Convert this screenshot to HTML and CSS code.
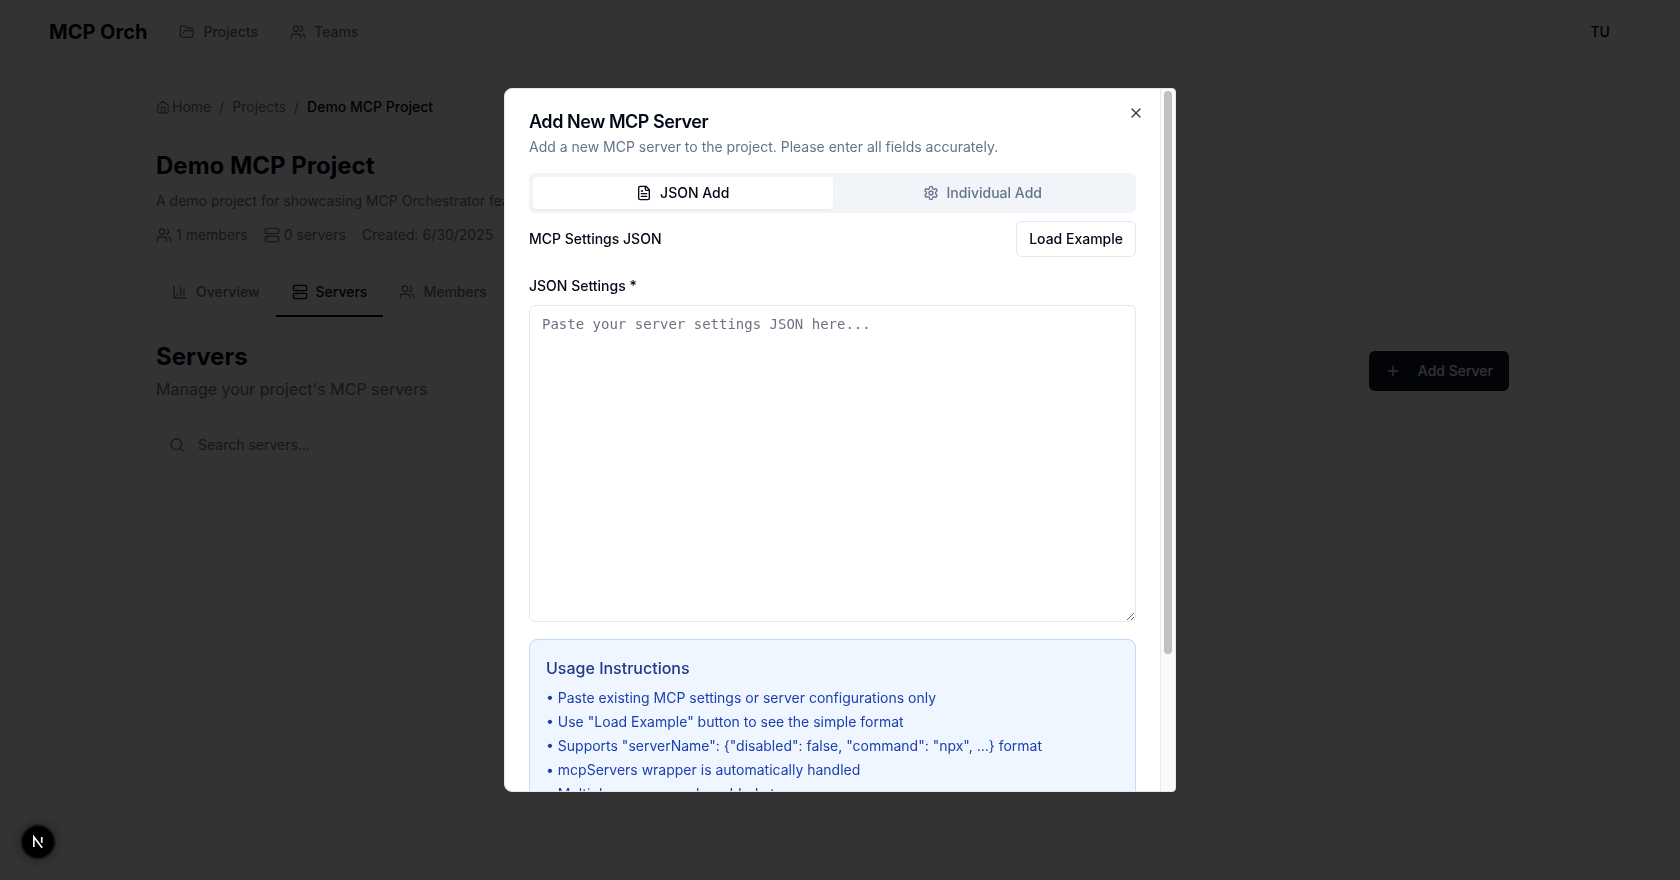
FILE: index.html
```html
<!DOCTYPE html>
<html lang="en">
<head>
<meta charset="utf-8">
<title>MCP Orch</title>
<link rel="stylesheet" href="styles.css">
</head>
<body>
<svg class="sprite" aria-hidden="true">
  <symbol id="i-folder" viewBox="0 0 24 24"><path d="m6 14 1.5-2.9A2 2 0 0 1 9.24 10H20a2 2 0 0 1 1.94 2.5l-1.54 6a2 2 0 0 1-1.95 1.5H4a2 2 0 0 1-2-2V5a2 2 0 0 1 2-2h3.9a2 2 0 0 1 1.69.9l.81 1.2a2 2 0 0 0 1.67.9H18a2 2 0 0 1 2 2v2"/></symbol>
  <symbol id="i-users" viewBox="0 0 24 24"><path d="M16 21v-2a4 4 0 0 0-4-4H6a4 4 0 0 0-4 4v2"/><circle cx="9" cy="7" r="4"/><path d="M22 21v-2a4 4 0 0 0-3-3.87"/><path d="M16 3.13a4 4 0 0 1 0 7.75"/></symbol>
  <symbol id="i-home" viewBox="0 0 24 24"><path d="m3 9 9-7 9 7v11a2 2 0 0 1-2 2H5a2 2 0 0 1-2-2z"/><path d="M9 22V12h6v10"/></symbol>
  <symbol id="i-server" viewBox="0 0 24 24"><rect x="2" y="2" width="20" height="8" rx="2"/><rect x="2" y="14" width="20" height="8" rx="2"/><path d="M6 6h.01M6 18h.01"/></symbol>
  <symbol id="i-chart" viewBox="0 0 24 24"><path d="M3 3v18h18"/><path d="M18 17V9"/><path d="M13 17V5"/><path d="M8 17v-3"/></symbol>
  <symbol id="i-search" viewBox="0 0 24 24"><circle cx="11" cy="11" r="8"/><path d="m21 21-4.3-4.3"/></symbol>
  <symbol id="i-plus" viewBox="0 0 24 24"><path d="M5 12h14"/><path d="M12 5v14"/></symbol>
  <symbol id="i-file" viewBox="0 0 24 24"><path d="M15 2H6a2 2 0 0 0-2 2v16a2 2 0 0 0 2 2h12a2 2 0 0 0 2-2V7Z"/><path d="M14 2v4a2 2 0 0 0 2 2h4"/><path d="M10 9H8"/><path d="M16 13H8"/><path d="M16 17H8"/></symbol>
  <symbol id="i-gear" viewBox="0 0 24 24"><path d="M12.22 2h-.44a2 2 0 0 0-2 2v.18a2 2 0 0 1-1 1.73l-.43.25a2 2 0 0 1-2 0l-.15-.08a2 2 0 0 0-2.73.73l-.22.38a2 2 0 0 0 .73 2.73l.15.1a2 2 0 0 1 1 1.72v.51a2 2 0 0 1-1 1.74l-.15.09a2 2 0 0 0-.73 2.73l.22.38a2 2 0 0 0 2.73.73l.15-.08a2 2 0 0 1 2 0l.43.25a2 2 0 0 1 1 1.73V20a2 2 0 0 0 2 2h.44a2 2 0 0 0 2-2v-.18a2 2 0 0 1 1-1.73l.43-.25a2 2 0 0 1 2 0l.15.08a2 2 0 0 0 2.73-.73l.22-.39a2 2 0 0 0-.73-2.73l-.15-.08a2 2 0 0 1-1-1.74v-.5a2 2 0 0 1 1-1.74l.15-.09a2 2 0 0 0 .73-2.73l-.22-.38a2 2 0 0 0-2.73-.73l-.15.08a2 2 0 0 1-2 0l-.43-.25a2 2 0 0 1-1-1.73V4a2 2 0 0 0-2-2z"/><circle cx="12" cy="12" r="3"/></symbol>
  <symbol id="i-x" viewBox="0 0 24 24"><path d="M18 6 6 18"/><path d="m6 6 12 12"/></symbol>
</svg>

<header class="topbar">
  <div class="topbar-left">
    <span class="brand">MCP Orch</span>
    <nav class="mainnav">
      <a class="navlink"><svg class="icon"><use href="#i-folder"/></svg>Projects</a>
      <a class="navlink"><svg class="icon"><use href="#i-users"/></svg>Teams</a>
    </nav>
  </div>
  <span class="avatar">TU</span>
</header>

<main class="page">
  <nav class="crumbs">
    <a class="crumb crumb-home"><svg class="icon icon-14"><use href="#i-home"/></svg>Home</a>
    <span class="crumb">/</span>
    <a class="crumb">Projects</a>
    <span class="crumb">/</span>
    <span class="crumb-current">Demo MCP Project</span>
  </nav>

  <h1 class="project-title">Demo MCP Project</h1>
  <p class="project-desc">A demo project for showcasing MCP Orchestrator features</p>
  <div class="meta">
    <span class="meta-item"><svg class="icon"><use href="#i-users"/></svg>1 members</span>
    <span class="meta-item"><svg class="icon"><use href="#i-server"/></svg>0 servers</span>
    <span class="meta-item">Created: 6/30/2025</span>
  </div>

  <div class="pagetabs">
    <a class="pagetab"><svg class="icon"><use href="#i-chart"/></svg>Overview</a>
    <a class="pagetab pagetab-active"><svg class="icon"><use href="#i-server"/></svg>Servers</a>
    <a class="pagetab"><svg class="icon"><use href="#i-users"/></svg>Members</a>
  </div>

  <section class="servers-head">
    <div>
      <h2 class="servers-title">Servers</h2>
      <p class="servers-desc">Manage your project's MCP servers</p>
    </div>
    <button class="add-server"><svg class="icon"><use href="#i-plus"/></svg>Add Server</button>
  </section>

  <div class="search">
    <svg class="icon"><use href="#i-search"/></svg>
    <span>Search servers...</span>
  </div>

  <div class="empty-card"></div>
</main>

<div class="overlay">
  <div class="dialog">
    <button class="dialog-close" aria-label="Close"><svg class="icon"><use href="#i-x"/></svg></button>
    <h3 class="dialog-title">Add New MCP Server</h3>
    <p class="dialog-desc">Add a new MCP server to the project. Please enter all fields accurately.</p>

    <div class="modetabs">
      <button class="modetab modetab-active"><svg class="icon"><use href="#i-file"/></svg>JSON Add</button>
      <button class="modetab"><svg class="icon"><use href="#i-gear"/></svg>Individual Add</button>
    </div>

    <div class="json-row">
      <span class="field-label">MCP Settings JSON</span>
      <button class="outline-btn">Load Example</button>
    </div>

    <label class="field-label json-label" for="json">JSON Settings *</label>
    <textarea id="json" class="json-input" placeholder="Paste your server settings JSON here..."></textarea>

    <div class="usage">
      <h4 class="usage-title">Usage Instructions</h4>
      <ul class="usage-list">
        <li>• Paste existing MCP settings or server configurations only</li>
        <li>• Use "Load Example" button to see the simple format</li>
        <li>• Supports "serverName": {"disabled": false, "command": "npx", ...} format</li>
        <li>• mcpServers wrapper is automatically handled</li>
        <li>• Multiple servers can be added at once</li>
      </ul>
    </div>

    <div class="scrolltrack"><div class="scrollthumb"></div></div>
  </div>
</div>

<div class="dev-badge">
  <svg viewBox="0 0 24 24" class="dev-n"><path d="M7 18V6l10 13"/><path d="M16.5 6v7"/></svg>
</div>
</body>
</html>
```

FILE: styles.css
```css
* { box-sizing: border-box; }

html, body { margin: 0; height: 100%; }

body {
  font-family: Inter, "Noto Sans", sans-serif;
  font-size: 14px;
  line-height: 20px;
  color: #020817;
  background: #fff;
  overflow: hidden;
}

.sprite { width: 0; height: 0; position: absolute; }

.icon {
  width: 16px;
  height: 16px;
  flex: none;
  fill: none;
  stroke: currentColor;
  stroke-width: 2;
  stroke-linecap: round;
  stroke-linejoin: round;
}

.icon-14 { width: 14px; height: 14px; }

button { font: inherit; cursor: pointer; }

h1, h2, h3, h4, p, ul { margin: 0; padding: 0; }

/* top bar */
.topbar {
  height: 66px;
  padding: 0 49px 2px;
  display: flex;
  align-items: center;
  justify-content: space-between;
  border-bottom: 1px solid #f1f5f9;
}

.topbar-left { display: flex; align-items: center; gap: 32px; }

.brand { font-size: 20px; font-weight: 700; line-height: 28px; }

.mainnav { display: flex; gap: 32px; }

.navlink {
  display: flex;
  align-items: center;
  gap: 8px;
  color: #64748b;
  font-weight: 500;
}

.avatar { margin-right: 21px; font-weight: 500; }

/* page */
.page { padding: 31px 171px 0 156px; }

.crumbs { display: flex; align-items: center; gap: 8px; height: 20px; color: #64748b; }

.crumb-home { display: flex; align-items: center; gap: 2px; }

.crumb-current { color: #020817; font-weight: 500; }

.project-title { margin-top: 33px; font-size: 24px; line-height: 32px; font-weight: 700; }

.project-desc { margin-top: 9px; color: #64748b; }

.meta { display: flex; gap: 16px; margin-top: 14px; color: #64748b; }

.meta-item { display: flex; align-items: center; gap: 4px; }

.pagetabs { display: flex; margin-top: 24px; }

.pagetab {
  display: flex;
  align-items: center;
  gap: 8px;
  height: 48px;
  padding: 0 16px;
  color: #64748b;
  font-weight: 500;
  border-bottom: 2px solid transparent;
}

.pagetab-active { color: #020817; border-bottom-color: #020817; }

.servers-head {
  display: flex;
  align-items: center;
  justify-content: space-between;
  margin-top: 24px;
}

.servers-title { font-size: 24px; line-height: 32px; font-weight: 700; }

.servers-desc { margin-top: 4px; font-size: 16px; line-height: 24px; color: #64748b; }

.add-server {
  display: flex;
  align-items: center;
  gap: 17px;
  height: 40px;
  padding: 0 16px;
  border: 0;
  border-radius: 6px;
  background: #0f172a;
  color: #f8fafc;
  font-weight: 500;
}

.search {
  display: flex;
  align-items: center;
  gap: 13px;
  width: 448px;
  height: 48px;
  margin-top: 20px;
  padding: 0 12px;
  border: 1px solid #f1f5f9;
  border-radius: 6px;
  color: #64748b;
}

.empty-card {
  height: 269px;
  margin-top: 26px;
  border: 1px solid #e9edf2;
  border-radius: 8px;
}

/* modal */
.overlay {
  position: fixed;
  inset: 0;
  display: flex;
  align-items: center;
  justify-content: center;
  background: rgba(0, 0, 0, 0.8);
}

.dialog {
  position: relative;
  width: 672px;
  height: 704px;
  padding: 24px 39px 24px 24px;
  overflow: hidden;
  background: #fff;
  border: 1px solid #e2e8f0;
  border-radius: 8px 4px 4px 8px;
}

.scrolltrack {
  position: absolute;
  top: 0;
  right: 0;
  bottom: 0;
  width: 15px;
  padding: 2px 3px 0;
  background: #fafafa;
  border-left: 1px solid #e8e8e8;
}

.scrollthumb {
  height: 563px;
  border-radius: 4px;
  background: #c1c1c1;
}

.dialog-close {
  position: absolute;
  top: 16px;
  right: 31px;
  display: flex;
  padding: 0;
  border: 0;
  background: none;
  color: #334155;
}

.dialog-title { font-size: 18px; line-height: 18px; font-weight: 600; letter-spacing: -0.45px; }

.dialog-desc { margin-top: 6px; color: #64748b; }

.modetabs {
  display: grid;
  grid-template-columns: 1fr 1fr;
  height: 40px;
  margin-top: 16px;
  padding: 4px;
  border-radius: 6px;
  background: #f1f5f9;
}

.modetab {
  display: flex;
  align-items: center;
  justify-content: center;
  gap: 8px;
  border: 0;
  border-radius: 4px;
  background: none;
  color: #64748b;
  font-weight: 500;
}

.modetab-active {
  background: #fff;
  color: #020817;
  box-shadow: 0 1px 2px rgba(0, 0, 0, 0.05);
}

.json-row {
  display: flex;
  align-items: center;
  justify-content: space-between;
  margin-top: 8px;
}

.field-label { font-weight: 500; }

.json-label { display: block; margin-top: 19px; }

.outline-btn {
  height: 36px;
  padding: 0 12px;
  border: 1px solid #e2e8f0;
  border-radius: 6px;
  background: #fff;
  color: #020817;
  font-weight: 500;
}

.json-input {
  display: block;
  width: 100%;
  height: 317px;
  margin-top: 9px;
  padding: 8px 12px;
  border: 1px solid #e2e8f0;
  border-radius: 6px;
  outline: 0;
  font-family: "DejaVu Sans Mono", "Liberation Mono", monospace;
  font-size: 14px;
  line-height: 20px;
}

.json-input::placeholder { color: #6b7280; }

.usage {
  margin-top: 17px;
  padding: 16px;
  border: 1px solid #bfdbfe;
  border-radius: 8px;
  background: #eff6ff;
}

.usage-title { font-size: 16px; line-height: 24px; font-weight: 500; color: #1e3a8a; }

.usage-list {
  display: flex;
  flex-direction: column;
  gap: 4px;
  margin-top: 8px;
  list-style: none;
  color: #1e40af;
}

/* dev badge */
.dev-badge {
  position: fixed;
  left: 20px;
  bottom: 20px;
  width: 36px;
  height: 36px;
  display: flex;
  align-items: center;
  justify-content: center;
  border: 2px solid #1c1c1c;
  border-radius: 50%;
  background: #000;
  box-shadow: 0 0 0 1px rgba(255, 255, 255, 0.04), 0 0 6px 2px rgba(0, 0, 0, 0.25);
}

.dev-n { width: 20px; height: 20px; fill: none; stroke: #fff; stroke-width: 2; }
```
